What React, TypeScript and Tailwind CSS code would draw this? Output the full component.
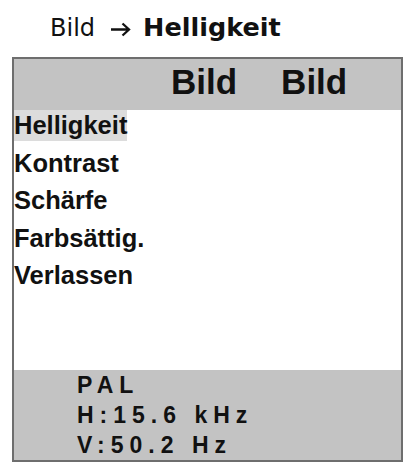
export default function App() {
  const items = ['Helligkeit', 'Kontrast', 'Schärfe', 'Farbsättig.', 'Verlassen']

  return (
    <div className="w-[407px] h-[462px] bg-white overflow-hidden text-[#111]">
      <div
        className="pt-[14px] pl-[50px] h-[57px] flex items-baseline text-[24px] leading-[27px]"
        style={{ fontFamily: '"DejaVu Sans", Verdana, sans-serif' }}
      >
        <span>Bild</span>
        <svg width="21" height="15" viewBox="0 0 21 15" className="ml-[15px] self-start mt-[8px]">
          <path d="M1 7.5H19M12.5 1.5L19 7.5L12.5 13.5" fill="none" stroke="#111" strokeWidth="2.3" />
        </svg>
        <span className="ml-[12px] font-bold text-[25.5px]">Helligkeit</span>
      </div>

      <div
        className="ml-[12px] w-[391px] h-[405px] border-2 border-[#6e6e6e] flex flex-col"
        style={{ fontFamily: '"Liberation Sans", Arial, sans-serif' }}
      >
        <div className="h-[51px] bg-[#c3c3c3] flex items-start pl-[157px] gap-[44px] font-bold text-[35px] leading-[45px]">
          <span>Bild</span>
          <span>Bild</span>
        </div>

        <div className="h-[260px] bg-white flex flex-col items-start gap-[6.5px] font-bold text-[25.5px] leading-[31px]">
          {items.map((item, i) => (
            <span key={item} className={i === 0 ? 'bg-[#dcdcdc]' : ''}>
              {item}
            </span>
          ))}
        </div>

        <div className="flex-1 bg-[#c3c3c3] pl-[63px] font-bold text-[23px] leading-[30px] tracking-[6px]">
          <div>PAL</div>
          <div>H:15.6 kHz</div>
          <div>V:50.2 Hz</div>
        </div>
      </div>
    </div>
  )
}
